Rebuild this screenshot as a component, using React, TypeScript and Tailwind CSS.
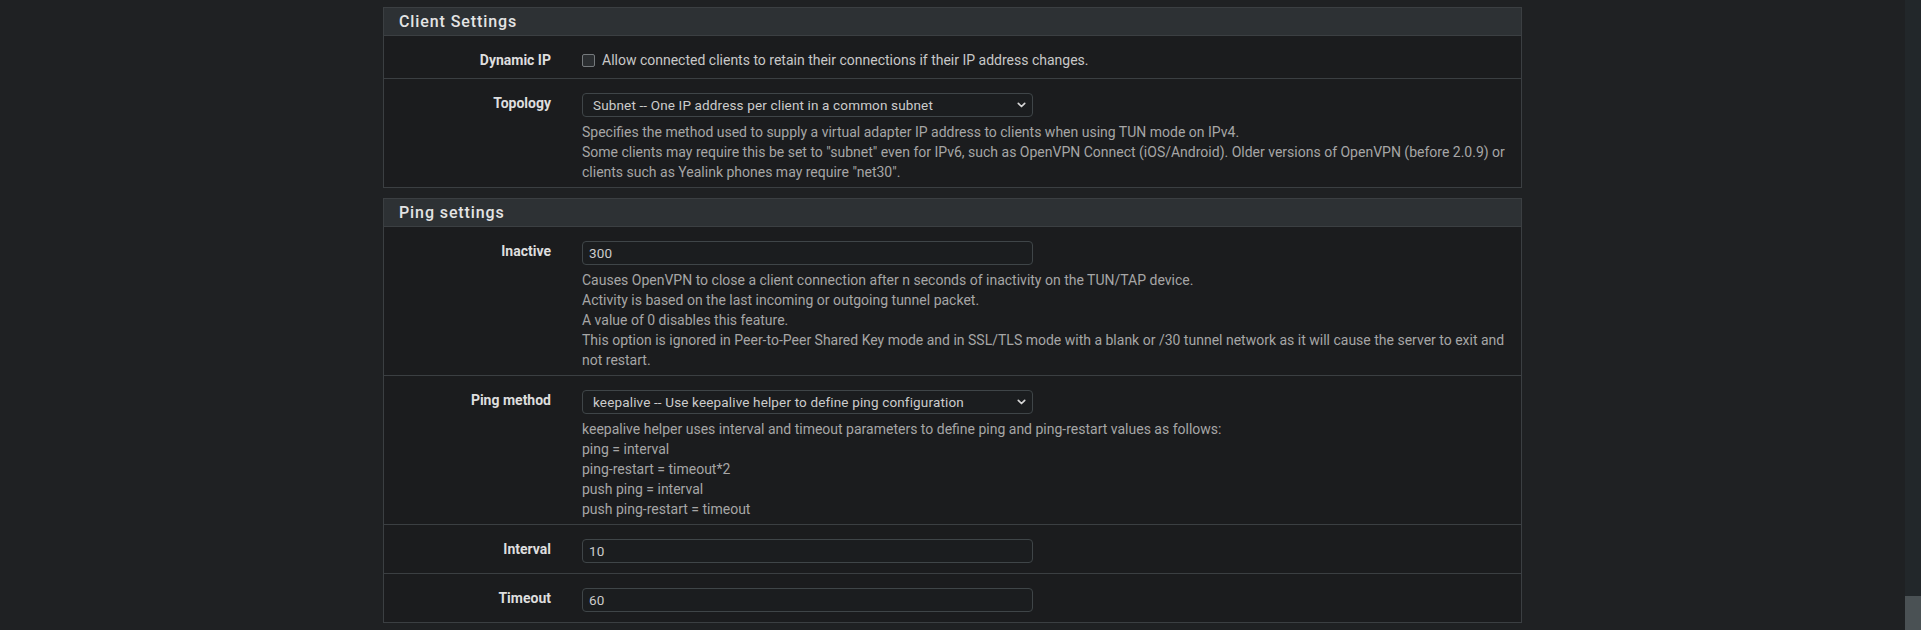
import React from "react";

type Row = {
  label: string;
  kind: "checkbox" | "select" | "input";
  value: string;
  help?: string[];
};

const panels: { title: string; rows: Row[] }[] = [
  {
    title: "Client Settings",
    rows: [
      {
        label: "Dynamic IP",
        kind: "checkbox",
        value: "Allow connected clients to retain their connections if their IP address changes.",
      },
      {
        label: "Topology",
        kind: "select",
        value: "Subnet -- One IP address per client in a common subnet",
        help: [
          "Specifies the method used to supply a virtual adapter IP address to clients when using TUN mode on IPv4.",
          'Some clients may require this be set to "subnet" even for IPv6, such as OpenVPN Connect (iOS/Android). Older versions of OpenVPN (before 2.0.9) or clients such as Yealink phones may require "net30".',
        ],
      },
    ],
  },
  {
    title: "Ping settings",
    rows: [
      {
        label: "Inactive",
        kind: "input",
        value: "300",
        help: [
          "Causes OpenVPN to close a client connection after n seconds of inactivity on the TUN/TAP device.",
          "Activity is based on the last incoming or outgoing tunnel packet.",
          "A value of 0 disables this feature.",
          "This option is ignored in Peer-to-Peer Shared Key mode and in SSL/TLS mode with a blank or /30 tunnel network as it will cause the server to exit and not restart.",
        ],
      },
      {
        label: "Ping method",
        kind: "select",
        value: "keepalive -- Use keepalive helper to define ping configuration",
        help: [
          "keepalive helper uses interval and timeout parameters to define ping and ping-restart values as follows:",
          "ping = interval",
          "ping-restart = timeout*2",
          "push ping = interval",
          "push ping-restart = timeout",
        ],
      },
      { label: "Interval", kind: "input", value: "10" },
      { label: "Timeout", kind: "input", value: "60" },
    ],
  },
];

function Field({ row }: { row: Row }) {
  if (row.kind === "checkbox") {
    return (
      <label className="flex items-center gap-[7px] text-[14px] leading-[20px] text-[#c8c8c8]">
        <span className="h-[13px] w-[13px] shrink-0 rounded-[2px] border border-[#75797c] bg-[#2b2e31]" />
        {row.value}
      </label>
    );
  }
  if (row.kind === "select") {
    return (
      <div className="flex h-[24px] w-[451px] items-center justify-between rounded-[4px] border border-[#3f4548] bg-[#1b1d1f] pl-[10px] pr-[6px] text-[13.5px] tracking-[0.15px] text-[#cccccc]">
        <span>{row.value}</span>
        <svg width="9" height="6" viewBox="0 0 9 6" fill="none">
          <path d="M1.3 1.3 L4.5 4.5 L7.7 1.3" stroke="#d6d6d6" strokeWidth="1.7" strokeLinecap="round" strokeLinejoin="round" />
        </svg>
      </div>
    );
  }
  return (
    <div className="flex h-[24px] w-[451px] items-center rounded-[4px] border border-[#3f4548] bg-[#1b1d1f] pl-[6px] text-[13.5px] tracking-[0.15px] text-[#cccccc]">
      {row.value}
    </div>
  );
}

export default function App() {
  return (
    <div className="flex h-[630px] bg-[#1f2123] font-['Roboto',sans-serif]">
      <main className="flex-1 overflow-hidden pt-[7px]">
        <div className="mx-auto flex w-[1139px] flex-col gap-[10px]">
          {panels.map((panel) => (
            <section key={panel.title} className="border border-[#3b3f42] bg-[#1b1c1e]">
              <div className="flex h-[28px] items-center border-b border-[#3b3f42] bg-[#2d3134] px-[15px] text-[16px] font-medium tracking-[0.9px] text-[#e4e4e4]">
                {panel.title}
              </div>
              {panel.rows.map((row, i) => (
                <div
                  key={row.label}
                  className={
                    "flex pt-[14px] " +
                    (row.help ? "pb-[5px] " : row.kind === "checkbox" ? "pb-[8px] " : "pb-[10px] ") +
                    (i > 0 ? "border-t border-[#3b3f42]" : "")
                  }
                >
                  <div className="w-[182px] shrink-0 pr-[15px] text-right text-[14px] font-bold leading-[20px] text-[#dedede]">
                    {row.label}
                  </div>
                  <div className="min-w-0 flex-1 pl-[16px] pr-[15px]">
                    <Field row={row} />
                    {row.help && (
                      <div className="mt-[5px] text-[14px] leading-[20px] text-[#a6a6a6]">
                        {row.help.map((line, j) => (
                          <p key={j}>{line}</p>
                        ))}
                      </div>
                    )}
                  </div>
                </div>
              ))}
            </section>
          ))}
        </div>
      </main>
      <aside className="flex w-[16px] flex-col bg-[#22272a]">
        <div className="flex-1" />
        <div className="h-[34px] bg-[#4a5154]" />
      </aside>
    </div>
  );
}
